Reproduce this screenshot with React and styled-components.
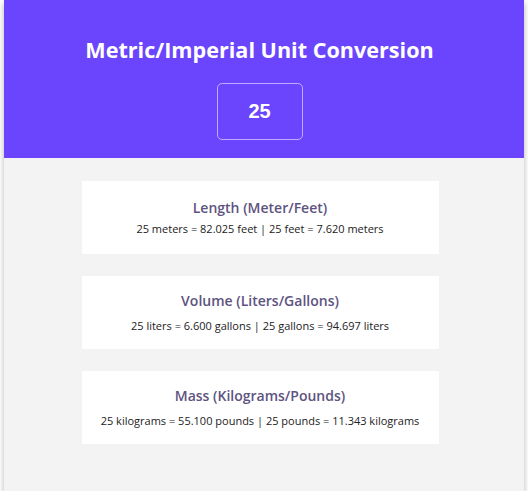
import React, { useState } from 'react';
import styled, { createGlobalStyle } from 'styled-components';

const GlobalStyle = createGlobalStyle`
  body {
    margin: 0;
    background: #ffffff;
    font-family: 'Open Sans', 'Noto Sans', sans-serif;
  }
`;

const Page = styled.div`
  width: 520px;
  height: 491px;
  margin: 0 auto;
  background: #f3f3f3;
  box-shadow: 0 3px 6px rgba(0, 0, 0, 0.3);
  display: flex;
  flex-direction: column;
`;

// content sits a little left of centre, as if a scrollbar gutter were kept on the right
const Header = styled.header`
  height: 158px;
  box-sizing: border-box;
  background: #6b45fe;
  display: flex;
  flex-direction: column;
  align-items: center;
  padding: 34px 9px 0 0;
`;

const Title = styled.h1`
  margin: 0;
  color: #ffffff;
  font-size: 21.6px;
  font-weight: 700;
  line-height: 32px;
`;

const NumberInput = styled.input`
  margin-top: 17px;
  width: 86px;
  height: 57px;
  box-sizing: border-box;
  background: transparent;
  border: 1px solid rgba(255, 255, 255, 0.55);
  border-radius: 5px;
  color: #ffffff;
  text-align: center;
  font-family: 'Liberation Sans', Arial, sans-serif;
  font-size: 20px;
  font-weight: 700;
  outline: none;
`;

const Cards = styled.main`
  display: flex;
  flex-direction: column;
  align-items: center;
  gap: 22px;
  padding: 23px 8px 0 0;
`;

const Card = styled.section`
  width: 357px;
  height: 73px;
  box-sizing: border-box;
  background: #ffffff;
  display: flex;
  flex-direction: column;
  align-items: center;
  padding-top: ${(p) => (p.$loose ? '15px' : '17px')};
`;

const CardTitle = styled.h2`
  margin: 0;
  color: #5e5380;
  font-size: 14px;
  font-weight: 600;
  line-height: 20px;
`;

const CardText = styled.p`
  margin: ${(p) => (p.$loose ? '7px' : '3px')} 0 0;
  color: #222222;
  font-size: 11px;
  line-height: 16px;
`;

const conversions = [
  {
    title: 'Length (Meter/Feet)',
    a: ['meters', 'feet', 3.281],
    b: ['feet', 'meters', 0.3048],
  },
  {
    title: 'Volume (Liters/Gallons)',
    a: ['liters', 'gallons', 0.264],
    b: ['gallons', 'liters', 3.78788],
  },
  {
    title: 'Mass (Kilograms/Pounds)',
    a: ['kilograms', 'pounds', 2.204],
    b: ['pounds', 'kilograms', 0.45372],
  },
];

export default function App() {
  const [value, setValue] = useState('25');
  const n = Number(value) || 0;

  return (
    <>
      <GlobalStyle />
      <Page>
        <Header>
          <Title>Metric/Imperial Unit Conversion</Title>
          <NumberInput
            type="text"
            value={value}
            onChange={(e) => setValue(e.target.value)}
          />
        </Header>
        <Cards>
          {conversions.map((c, i) => (
            <Card key={c.title} $loose={i > 0}>
              <CardTitle>{c.title}</CardTitle>
              <CardText $loose={i > 0}>
                {n} {c.a[0]} = {(n * c.a[2]).toFixed(3)} {c.a[1]} | {n} {c.b[0]} ={' '}
                {(n * c.b[2]).toFixed(3)} {c.b[1]}
              </CardText>
            </Card>
          ))}
        </Cards>
      </Page>
    </>
  );
}
